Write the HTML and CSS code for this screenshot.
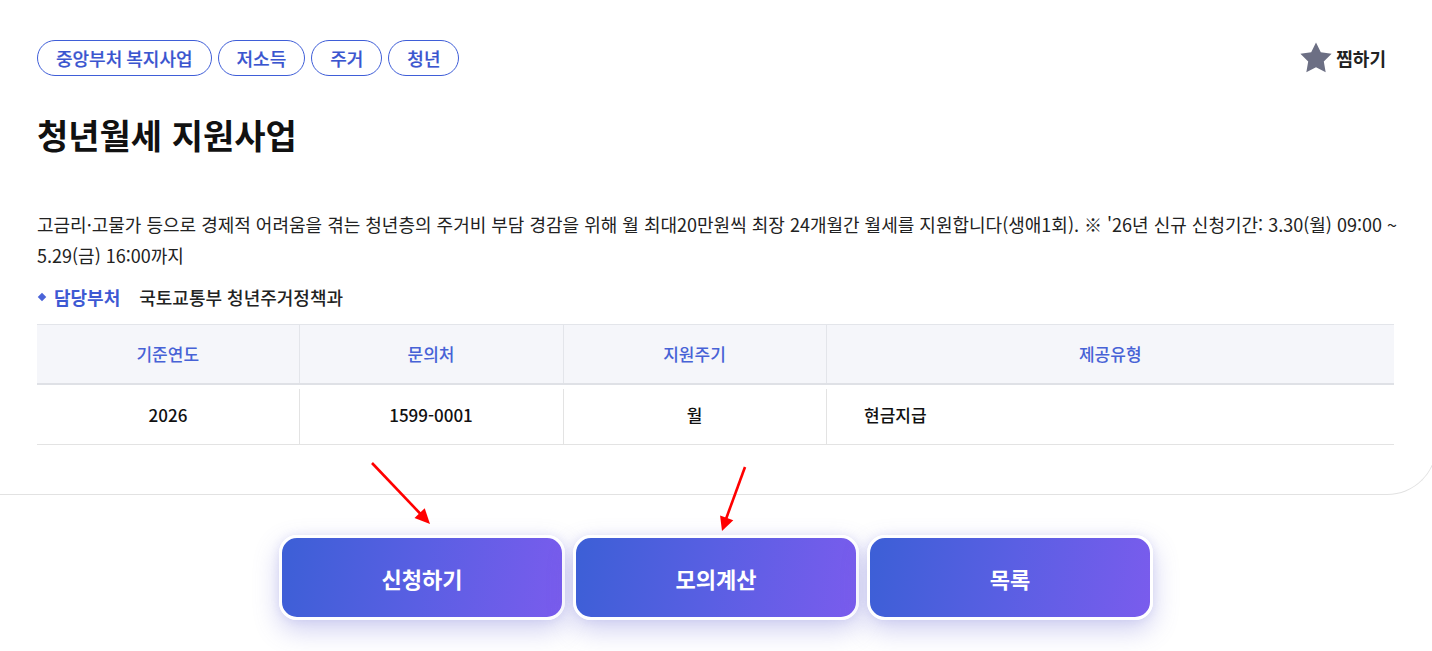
FILE: index.html
```html
<!DOCTYPE html>
<html lang="ko">
<head>
<meta charset="utf-8">
<title>청년월세 지원사업</title>
<link rel="stylesheet" href="styles.css">
</head>
<body>
<div class="page">
  <section class="card">
    <div class="top-row">
      <ul class="tags">
        <li class="tag">중앙부처 복지사업</li>
        <li class="tag">저소득</li>
        <li class="tag">주거</li>
        <li class="tag">청년</li>
      </ul>
      <button class="fav" type="button">
        <svg class="star" viewBox="0 0 24 24" width="36" height="36" aria-hidden="true"><path d="M12 1.6l3.2 6.6 7.2 1-5.2 5.1 1.25 7.2L12 18.1l-6.45 3.4 1.25-7.2L1.6 9.2l7.2-1z"/></svg>
        <span>찜하기</span>
      </button>
    </div>
    <h1 class="title">청년월세 지원사업</h1>
    <p class="desc">고금리·고물가 등으로 경제적 어려움을 겪는 청년층의 주거비 부담 경감을 위해 월 최대20만원씩 최장 24개월간 월세를 지원합니다(생애1회). ※ '26년 신규 신청기간: 3.30(월) 09:00 ~ 5.29(금) 16:00까지</p>
    <div class="dept">
      <span class="dept-label">담당부처</span>
      <span class="dept-value">국토교통부 청년주거정책과</span>
    </div>
    <table class="info">
      <colgroup>
        <col class="c1"><col class="c2"><col class="c3"><col>
      </colgroup>
      <thead>
        <tr><th>기준연도</th><th>문의처</th><th>지원주기</th><th>제공유형</th></tr>
      </thead>
      <tbody>
        <tr><td>2026</td><td>1599-0001</td><td>월</td><td class="left">현금지급</td></tr>
      </tbody>
    </table>
  </section>
  <div class="actions">
    <button class="btn" type="button">신청하기</button>
    <button class="btn" type="button">모의계산</button>
    <button class="btn" type="button">목록</button>
  </div>
  <svg class="arrows" width="1432" height="651" viewBox="0 0 1432 651" aria-hidden="true">
    <line x1="372" y1="463" x2="422" y2="515.5" />
    <polygon points="430,524 424.7,508.3 414.5,517.9" />
    <line x1="745" y1="467" x2="726" y2="519" />
    <polygon points="722,531 733.3,520.2 720.1,515.4" />
  </svg>
</div>
</body>
</html>
```

FILE: styles.css
```css
html, body {
  margin: 0;
  padding: 0;
  overflow: hidden;
  background: #ffffff;
}
body {
  font-family: "Noto Sans CJK KR", "Noto Sans", sans-serif;
  color: #222;
}
.page {
  position: relative;
  width: 1432px;
  height: 651px;
}
.card {
  width: 1437px;
  box-sizing: border-box;
  padding: 40px 46px 49px 37px;
  border-bottom: 1px solid #e2e2e2;
  border-right: 1px solid #e2e2e2;
  border-bottom-right-radius: 50px;
}
.top-row {
  display: flex;
  justify-content: space-between;
  align-items: center;
}
.tags {
  list-style: none;
  margin: 0;
  padding: 0;
  display: flex;
  gap: 6px;
}
.tag {
  height: 36px;
  box-sizing: border-box;
  padding: 0 18px;
  border: 1px solid #3f5ed8;
  border-radius: 18px;
  color: #3a55cf;
  font-size: 18px;
  font-weight: 500;
  word-spacing: -1px;
  -webkit-text-stroke: 0.2px #3a55cf;
  display: flex;
  align-items: center;
}
.fav {
  display: flex;
  align-items: center;
  gap: 2px;
  background: none;
  border: 0;
  padding: 0;
  margin-right: 4px;
  font-family: inherit;
  font-size: 18px;
  font-weight: 700;
  color: #222;
}
.star {
  fill: #6c6f84;
}
.title {
  margin: 37px 0 0;
  font-size: 34px;
  line-height: 44px;
  font-weight: 700;
  color: #111;
}
.desc {
  margin: 52px 0 0;
  width: 1372px;
  font-size: 18px;
  line-height: 31px;
  color: #222;
}
.dept {
  margin-top: 13px;
  display: flex;
  align-items: center;
  height: 26px;
  font-size: 18px;
  font-weight: 700;
}
.dept-label {
  color: #3d59d3;
  position: relative;
  padding-left: 17px;
  margin-right: 19px;
}
.dept-label::before {
  content: "";
  position: absolute;
  left: 2px;
  top: 50%;
  width: 6px;
  height: 6px;
  margin-top: -3px;
  background: #4a63d8;
  transform: rotate(45deg);
}
.dept-value {
  color: #222;
  font-weight: 500;
}
.info {
  margin-top: 14px;
  width: 1357px;
  border-collapse: collapse;
  table-layout: fixed;
}
.info .c1 { width: 262px; }
.info .c2 { width: 264px; }
.info .c3 { width: 263px; }
.info th {
  height: 59px;
  box-sizing: border-box;
  background: #f5f6fa;
  border-top: 1px solid #e3e5ea;
  border-bottom: 2px solid #dfe1e6;
  border-left: 1px solid #e3e5ea;
  color: #4762d6;
  font-size: 17px;
  font-weight: 500;
  text-align: center;
  padding: 0;
}
.info th:first-child,
.info td:first-child {
  border-left: 0;
  background-image: none;
}
.info td {
  height: 61px;
  box-sizing: border-box;
  padding: 0;
  border-bottom: 1px solid #e3e3e3;
  background: linear-gradient(#e3e3e3, #e3e3e3) left 4px / 1px calc(100% - 4px) no-repeat;
  font-size: 17px;
  font-weight: 500;
  color: #111;
  text-align: center;
}
.info td.left {
  text-align: left;
  padding-left: 38px;
}
.actions {
  margin-top: 40px;
  display: flex;
  justify-content: center;
  gap: 8px;
}
.btn {
  width: 286px;
  height: 85px;
  box-sizing: border-box;
  border: 3px solid #ffffff;
  border-radius: 18px;
  background: linear-gradient(100deg, #3c5fd6 0%, #5a5fe3 50%, #7a5ced 100%);
  color: #ffffff;
  font-family: inherit;
  font-size: 22px;
  font-weight: 700;
  box-shadow: 0 10px 26px rgba(96, 96, 210, 0.3), 0 0 8px rgba(96, 96, 210, 0.12);
}
.arrows {
  position: absolute;
  left: 0;
  top: 0;
  pointer-events: none;
}
.arrows line {
  stroke: #ff0000;
  stroke-width: 2.6;
}
.arrows polygon {
  fill: #ff0000;
}
```
